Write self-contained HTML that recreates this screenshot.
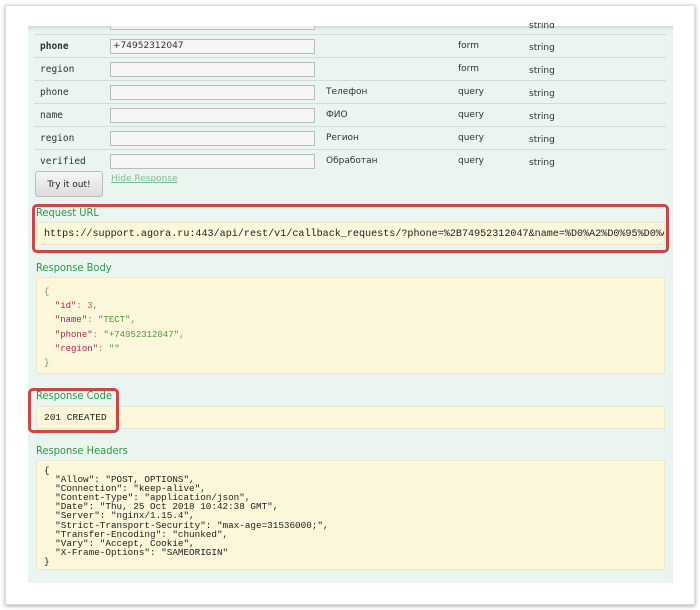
<!DOCTYPE html>
<html><head><meta charset="utf-8"><style>
body{margin:0;width:700px;height:610px;background:#fff;position:relative;overflow:hidden;font-family:"DejaVu Sans","Liberation Sans",sans-serif}
.card{position:absolute;left:5px;top:5px;width:688px;height:598px;background:#fff;border:1px solid #ddd;box-shadow:0 1px 4px rgba(0,0,0,.35)}
.panel{position:absolute;left:28px;top:26px;width:645px;height:557px;background:#e9f5ee;box-shadow:0 4px 4px -2px rgba(0,0,0,.12) inset}
.row{position:absolute;left:34px;width:632px;height:23px;border-top:1px solid #d2ddd6;font-size:9px;color:#333}
.row span{position:absolute;top:6px}
.n{left:6px;font-family:"DejaVu Sans Mono",monospace;font-size:9.5px}
.inp{position:absolute;left:76px;top:4px;border:1px solid #bbb;background:#f5f5f5;font-size:9px;line-height:13px;padding-left:2px;box-sizing:border-box;width:205px;height:15px}
.d{left:292px}.p{left:424px}.t{left:495px;top:8px!important}
.lbl{position:absolute;left:36px;font-size:11px;color:#2a9a4a;font-family:"DejaVu Sans Condensed","Liberation Sans",sans-serif}
.box{position:absolute;left:36px;width:629px;background:#fcf6db;border:1px solid #efe8cc;box-sizing:border-box;font-family:"Liberation Mono",monospace;color:#222}
.red{position:absolute;border:3px solid #c84848;border-radius:5px;box-sizing:border-box}
.k{color:#a3295a}.s{color:#4a9a3a}
</style></head><body>
<div class="card"></div>
<div class="panel"></div>
<div style="position:absolute;left:110px;top:26px;width:205px;height:4px;border:1px solid #bbb;border-top:none;background:#f0f0f0;box-sizing:border-box"></div>
<div style="position:absolute;left:529px;top:22px;height:6px;overflow:hidden;font-size:9px;color:#333;line-height:9px">string</div>
<div class="row" style="top:34px"><span class="n" style="font-weight:bold">phone</span><div class="inp">+74952312047</div><span class="p">form</span><span class="t">string</span></div>
<div class="row" style="top:57px"><span class="n">region</span><div class="inp"></div><span class="p">form</span><span class="t">string</span></div>
<div class="row" style="top:80px"><span class="n">phone</span><div class="inp"></div><span class="d">Телефон</span><span class="p">query</span><span class="t">string</span></div>
<div class="row" style="top:103px"><span class="n">name</span><div class="inp"></div><span class="d">ФИО</span><span class="p">query</span><span class="t">string</span></div>
<div class="row" style="top:126px"><span class="n">region</span><div class="inp"></div><span class="d">Регион</span><span class="p">query</span><span class="t">string</span></div>
<div class="row" style="top:149px"><span class="n">verified</span><div class="inp"></div><span class="d">Обработан</span><span class="p">query</span><span class="t">string</span></div>
<div style="position:absolute;left:35px;top:171px;width:68px;height:26px;border:1px solid #bbb;border-radius:3px;background:linear-gradient(#f6f6f6,#dcdcdc);font-size:9px;line-height:26px;text-align:center;color:#222;box-sizing:border-box">Try it out!</div>
<div style="position:absolute;left:111px;top:174px;font-size:9px;color:#7bbf8e;text-decoration:underline">Hide Response</div>

<div class="lbl" style="top:206px">Request URL</div>
<div class="box" style="top:222px;height:23px;font-size:10.1px;line-height:23px;padding-left:7px;white-space:nowrap;overflow:hidden">https://support.agora.ru:443/api/rest/v1/callback_requests/?phone=%2B74952312047&amp;name=%D0%A2%D0%95%D0%A1%D0%A2</div>
<div class="red" style="left:32px;top:204px;width:637px;height:49px"></div>

<div class="lbl" style="top:261px">Response Body</div>
<div class="box" style="top:277px;height:97px;font-size:9px;line-height:14.2px;padding:7px 0 0 7px;white-space:pre;color:#888">{
  <span class="k">"id"</span>: <span style="color:#b0722a">3</span>,
  <span class="k">"name"</span>: <span class="s">"ТЕСТ"</span>,
  <span class="k">"phone"</span>: <span class="s">"+74952312047"</span>,
  <span class="k">"region"</span>: <span class="s">""</span>
}</div>

<div class="lbl" style="top:389px">Response Code</div>
<div class="box" style="top:406px;height:23px;font-size:9.5px;line-height:22px;padding-left:7px">201 CREATED</div>
<div class="red" style="left:28px;top:388px;width:91px;height:45px"></div>

<div class="lbl" style="top:444px">Response Headers</div>
<div class="box" style="top:460px;height:110px;font-size:9.3px;line-height:9.1px;padding:5px 0 0 7px;white-space:pre">{
  "Allow": "POST, OPTIONS",
  "Connection": "keep-alive",
  "Content-Type": "application/json",
  "Date": "Thu, 25 Oct 2018 10:42:38 GMT",
  "Server": "nginx/1.15.4",
  "Strict-Transport-Security": "max-age=31536000;",
  "Transfer-Encoding": "chunked",
  "Vary": "Accept, Cookie",
  "X-Frame-Options": "SAMEORIGIN"
}</div>
</body></html>
